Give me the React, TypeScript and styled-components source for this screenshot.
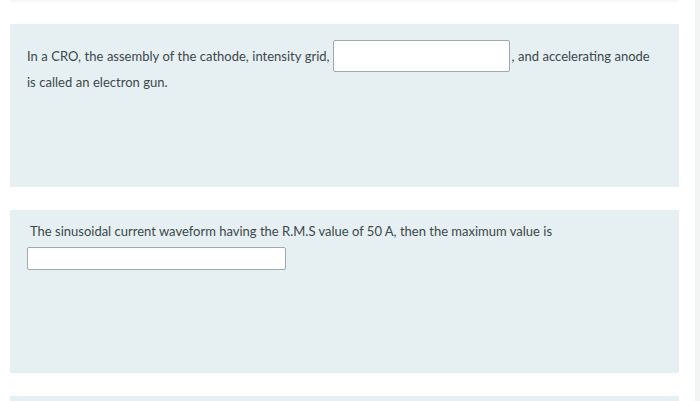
import styled, { createGlobalStyle } from "styled-components";

const GlobalStyle = createGlobalStyle`
  html, body {
    margin: 0;
    padding: 0;
    background: #ffffff;
  }
  body {
    font-family: Lato, "Open Sans", "Liberation Sans", sans-serif;
    font-size: 13px;
    color: #3d474a;
  }
`;

interface Question {
  id: number;
  kind: "inline" | "below";
  before: string;
  after?: string;
  inputWidth: number;
  inputHeight: number;
}

const questions: Question[] = [
  {
    id: 1,
    kind: "inline",
    before: "In a CRO, the assembly of the cathode, intensity grid,",
    after: ", and accelerating anode is called an electron gun.",
    inputWidth: 177,
    inputHeight: 32,
  },
  {
    id: 2,
    kind: "below",
    before:
      "The sinusoidal current waveform having the R.M.S value of 50 A, then the maximum value is",
    inputWidth: 259,
    inputHeight: 23,
  },
];

export default function App() {
  return (
    <>
      <GlobalStyle />
      <Page>
        <PrevEdge />
        <Column>
          {questions.map((q) => (
            <Card key={q.id} $top={q.kind === "inline" ? 16 : 11}>
              {q.kind === "inline" ? (
                <QText>
                  {q.before}
                  <Blank type="text" $w={q.inputWidth} $h={q.inputHeight} $inline />
                  {q.after}
                </QText>
              ) : (
                <>
                  <Prompt>{q.before}</Prompt>
                  <Blank type="text" $w={q.inputWidth} $h={q.inputHeight} />
                </>
              )}
            </Card>
          ))}
          <Card $top={9} />
        </Column>
        <Track />
      </Page>
    </>
  );
}

const Page = styled.div`
  position: relative;
  width: 700px;
  height: 401px;
  overflow: hidden;
  display: flex;
  padding: 24px 0 0 10px;
  box-sizing: border-box;
`;

const PrevEdge = styled.div`
  position: absolute;
  left: 10px;
  top: 0;
  width: 669px;
  height: 2px;
  background: #f6f8f8;
`;

const Column = styled.div`
  width: 669px;
  display: flex;
  flex-direction: column;
  gap: 23px;
`;

const Track = styled.div`
  margin-left: 16px;
  margin-top: -24px;
  width: 5px;
  height: 401px;
  background: #f3f4f4;
`;

const Card = styled.div<{ $top: number }>`
  background: #e6f0f3;
  min-height: 163px;
  box-sizing: border-box;
  padding: ${(p) => p.$top}px 24px 12px 17px;
  flex-shrink: 0;
`;

const QText = styled.div`
  line-height: 20px;
  word-spacing: 0.2px;
`;

const Prompt = styled.div`
  line-height: 20px;
  padding-left: 3px;
  margin-bottom: 6px;
`;

const Blank = styled.input<{ $w: number; $h: number; $inline?: boolean }>`
  display: ${(p) => (p.$inline ? "inline-block" : "block")};
  vertical-align: baseline;
  width: ${(p) => p.$w}px;
  height: ${(p) => p.$h}px;
  box-sizing: border-box;
  margin: ${(p) => (p.$inline ? "0 2px 0 3px" : "0")};
  padding: 0 6px;
  border: 1px solid #a3a8ad;
  border-radius: 2px;
  background: #ffffff;
  font: inherit;
  outline: none;
`;
